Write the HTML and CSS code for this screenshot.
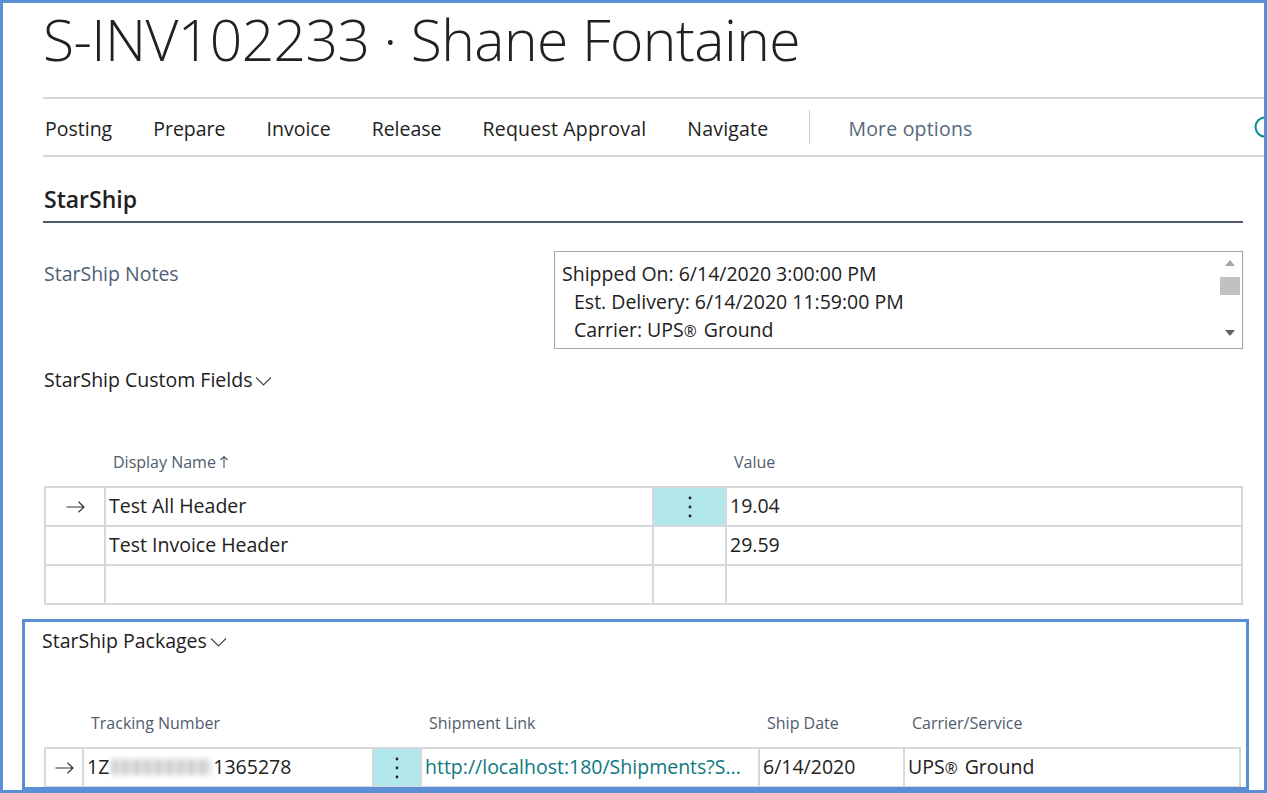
FILE: index.html
```html
<!DOCTYPE html>
<html lang="en">
<head>
<meta charset="utf-8">
<title>S-INV102233 · Shane Fontaine</title>
<link rel="stylesheet" href="styles.css">
</head>
<body>
<div class="frame">
  <div class="main">
    <h1 class="title">S-INV102233 · Shane Fontaine</h1>

    <nav class="actionbar">
      <span class="action">Posting</span>
      <span class="action">Prepare</span>
      <span class="action">Invoice</span>
      <span class="action">Release</span>
      <span class="action">Request Approval</span>
      <span class="action">Navigate</span>
      <span class="sep"></span>
      <span class="action more">More options</span>
      <svg class="search-icon" width="24" height="24" viewBox="0 0 24 24"><circle cx="12" cy="12" r="9.5" fill="none" stroke="#008c95" stroke-width="2"/></svg>
    </nav>

    <h2 class="section-head">StarShip</h2>

    <div class="notes-row">
      <div class="field-label">StarShip Notes</div>
      <div class="notes-box">
        <div class="notes-text">
          <div>Shipped On: 6/14/2020 3:00:00 PM</div>
          <div class="indent">Est. Delivery: 6/14/2020 11:59:00 PM</div>
          <div class="indent">Carrier: UPS<span class="reg">®</span> Ground</div>
        </div>
        <div class="scrollbar">
          <svg class="sb-up" width="10" height="6" viewBox="0 0 10 6"><path d="M0 6 L5 0 L10 6 Z" fill="#a6a6a6"/></svg>
          <div class="sb-thumb"></div>
          <svg class="sb-down" width="10" height="6" viewBox="0 0 10 6"><path d="M0 0 L5 6 L10 0 Z" fill="#606060"/></svg>
        </div>
      </div>
    </div>

    <div class="group-head">StarShip Custom Fields<svg class="chev" width="17" height="10" viewBox="0 0 17 10"><path d="M1 1.5 L8.5 9 L16 1.5" fill="none" stroke="#444" stroke-width="1.1"/></svg></div>

    <div class="grid cf-grid">
      <div class="hcell"></div>
      <div class="hcell">Display Name<svg class="sort" width="10" height="14" viewBox="0 0 10 14"><path d="M5 13 V1.5 M1.5 5 L5 1.5 L8.5 5" fill="none" stroke="#505c6d" stroke-width="1.2"/></svg></div>
      <div class="hcell"></div>
      <div class="hcell">Value</div>
    </div>
    <div class="grid cf-grid rows">
      <div class="cell arrow"><svg width="19" height="12" viewBox="0 0 19 12"><path d="M0.5 6 H18 M12.5 0.8 L18 6 L12.5 11.2" fill="none" stroke="#333" stroke-width="1.2"/></svg></div>
      <div class="cell">Test All Header</div>
      <div class="cell dots active"><svg width="4" height="22" viewBox="0 0 4 22"><circle cx="2" cy="2" r="1.4" fill="#222"/><circle cx="2" cy="11" r="1.4" fill="#222"/><circle cx="2" cy="20" r="1.4" fill="#222"/></svg></div>
      <div class="cell">19.04</div>

      <div class="cell"></div>
      <div class="cell">Test Invoice Header</div>
      <div class="cell"></div>
      <div class="cell">29.59</div>

      <div class="cell"></div>
      <div class="cell"></div>
      <div class="cell"></div>
      <div class="cell"></div>
    </div>

    <section class="packages">
      <div class="group-head pk-head">StarShip Packages<svg class="chev" width="17" height="10" viewBox="0 0 17 10"><path d="M1 1.5 L8.5 9 L16 1.5" fill="none" stroke="#444" stroke-width="1.1"/></svg></div>

      <div class="grid pk-grid">
        <div class="hcell"></div>
        <div class="hcell">Tracking Number</div>
        <div class="hcell"></div>
        <div class="hcell">Shipment Link</div>
        <div class="hcell">Ship Date</div>
        <div class="hcell">Carrier/Service</div>
      </div>
      <div class="grid pk-grid rows">
        <div class="cell arrow"><svg width="19" height="12" viewBox="0 0 19 12"><path d="M0.5 6 H18 M12.5 0.8 L18 6 L12.5 11.2" fill="none" stroke="#333" stroke-width="1.2"/></svg></div>
        <div class="cell">1Z<span class="blur"></span>1365278</div>
        <div class="cell dots active"><svg width="4" height="22" viewBox="0 0 4 22"><circle cx="2" cy="2" r="1.4" fill="#222"/><circle cx="2" cy="11" r="1.4" fill="#222"/><circle cx="2" cy="20" r="1.4" fill="#222"/></svg></div>
        <div class="cell link">http://localhost:180/Shipments?S...</div>
        <div class="cell">6/14/2020</div>
        <div class="cell">UPS<span class="reg">®</span> Ground</div>
      </div>
    </section>
  </div>
</div>
</body>
</html>
```
FILE: styles.css
```css
* { box-sizing: border-box; }
html, body { margin: 0; padding: 0; background: #fff; }
body {
  font-family: "Open Sans", "Noto Sans", sans-serif;
  color: #212121;
  width: 1267px;
  height: 793px;
  overflow: hidden;
}
.frame {
  width: 1267px;
  height: 793px;
  border: 3px solid #5a8fd5;
  overflow: hidden;
}
.main {
  padding-left: 40px;
  width: 1240px;
}
.title {
  margin: 0;
  height: 94px;
  padding-top: 0;
  font-weight: 300;
  font-size: 57px;
  letter-spacing: -0.6px;
  line-height: 72px;
  color: #212121;
  white-space: nowrap;
}
.actionbar {
  display: flex;
  align-items: center;
  gap: 41px;
  height: 60px;
  width: 1240px;
  border-top: 2px solid #d3d7db;
  border-bottom: 2px solid #d3d7db;
  font-size: 19.5px;
  white-space: nowrap;
  padding: 4px 0 0 2px;
}
.action { line-height: 28px; }
.action:nth-child(n+5) { letter-spacing: 0.2px; }
.more { color: #56667a; margin-left: -3px; }
.sep { width: 1px; height: 34px; background: #c9cdd2; margin-top: -4px; }
.search-icon { margin-left: auto; margin-right: 6px; margin-top: -4px; }
.section-head {
  margin: 0;
  width: 1200px;
  padding: 26px 0 6px 1px;
  line-height: 32px;
  font-size: 23px;
  font-weight: 600;
  border-bottom: 2px solid #4d5968;
}
.notes-row {
  display: flex;
  margin-top: 28px;
  width: 1200px;
}
.field-label {
  width: 511px;
  padding: 9px 0 0 1px;
  line-height: 28px;
  font-size: 19.5px;
  color: #4e5f74;
}
.notes-box {
  display: flex;
  width: 689px;
  height: 98px;
  border: 1px solid #a3a3a3;
}
.notes-text {
  flex: 1;
  padding: 8px 0 0 7px;
  line-height: 28px;
  font-size: 19.5px;
}
.indent { padding-left: 12px; }
.reg { font-size: 0.8em; margin-right: 2px; }
.scrollbar {
  width: 24px;
  display: flex;
  flex-direction: column;
  align-items: center;
  padding-top: 8px;
}
.sb-up { margin-bottom: 11px; }
.sb-thumb { width: 20px; height: 18px; background: #c1c1c1; }
.sb-down { margin-top: 35px; }
.group-head {
  margin-top: 17px;
  line-height: 28px;
  font-size: 19.5px;
  padding-left: 1px;
  display: flex;
  align-items: center;
  white-space: nowrap;
}
.chev { margin-left: 3px; margin-top: 2px; }
.grid { display: grid; width: 1199px; margin-left: 1px; }
.cf-grid { grid-template-columns: 60px 548px 73px 1fr; }
.cf-grid:not(.rows) { margin-top: 56px; }
.pk-grid { grid-template-columns: 38px 290px 48px 338px 145px 1fr; }
.hcell {
  height: 36px;
  padding: 0 0 12px 9px;
  line-height: 24px;
  font-size: 16px;
  color: #505c6d;
  display: flex;
  align-items: center;
  white-space: nowrap;
}
.sort { margin-left: 3px; }
.rows {
  border-top: 2px solid #d5d8dc;
  border-left: 2px solid #d5d8dc;
}
.cell {
  height: 39px;
  border-right: 2px solid #d5d8dc;
  border-bottom: 2px solid #d5d8dc;
  padding-left: 3px;
  line-height: 36px;
  font-size: 19.5px;
  white-space: nowrap;
  overflow: hidden;
}
.cell.arrow {
  display: flex;
  align-items: center;
  justify-content: center;
  padding-left: 0;
}
.cell.dots {
  display: flex;
  align-items: center;
  justify-content: center;
  padding-left: 0;
}
.cell.active { background: #b2e8ec; }
.cell.link { color: #0b7880; }
.blur {
  display: inline-block;
  width: 100px;
  height: 16px;
  margin: 0 2px;
  vertical-align: -1px;
  background: repeating-linear-gradient(90deg, #d0d0d0 0 7px, #e6e6e6 7px 11px);
  filter: blur(2.5px);
}
.packages {
  margin-top: 14px;
  margin-left: -21px;
  width: 1227px;
  height: 171px;
  border: 3px solid #5a8fd5;
  padding: 0 0 0 17px;
  overflow: hidden;
}
.pk-head { margin-top: 5px; padding-left: 0; }
.packages .grid { margin-left: 2px; width: 1197px; }
.pk-grid:not(.rows) { margin-top: 56px; }
```
